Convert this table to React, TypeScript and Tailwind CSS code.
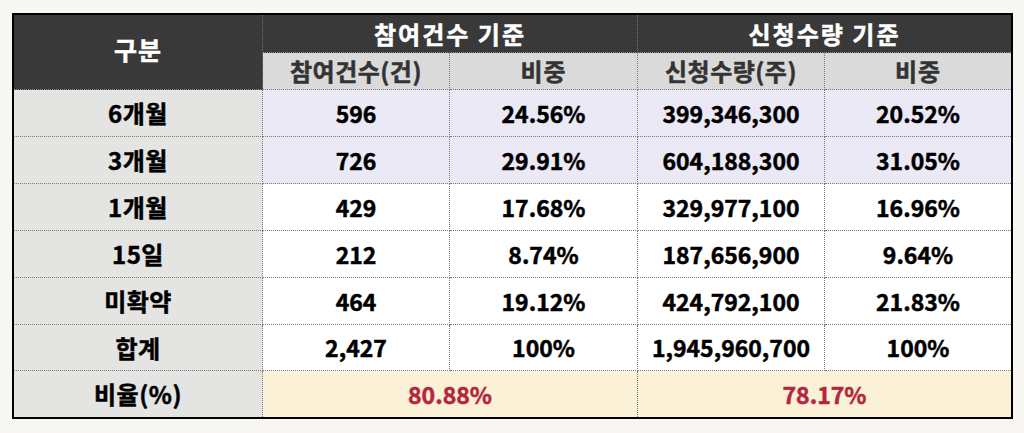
import React from "react";

const font = { fontFamily: '"Noto Sans CJK KR", "Noto Sans", sans-serif' };

type Row = { label: string; a: string; b: string; c: string; d: string; tint: boolean };

const rows: Row[] = [
  { label: "6개월", a: "596", b: "24.56%", c: "399,346,300", d: "20.52%", tint: true },
  { label: "3개월", a: "726", b: "29.91%", c: "604,188,300", d: "31.05%", tint: true },
  { label: "1개월", a: "429", b: "17.68%", c: "329,977,100", d: "16.96%", tint: false },
  { label: "15일", a: "212", b: "8.74%", c: "187,656,900", d: "9.64%", tint: false },
  { label: "미확약", a: "464", b: "19.12%", c: "424,792,100", d: "21.83%", tint: false },
  { label: "합계", a: "2,427", b: "100%", c: "1,945,960,700", d: "100%", tint: false },
];

export default function App() {
  return (
    <div className="w-[1024px] h-[433px] bg-[#f7f6f2] pt-[13px] pl-[12px]" style={font}>
      <div className="w-[1001px] border-2 border-black grid grid-cols-[249px_187px_188px_187px_186px] grid-rows-[38px_37px_47px_47px_47px_47px_47px_46px_46px] font-bold text-black [-webkit-text-stroke:0.5px_currentColor]">
        <div className="row-span-2 bg-[#393939] text-white text-[25px] tracking-[1px] flex items-center justify-center border-r border-[#6d6d6d] border-b border-dotted border-b-[#8a8a8a] pb-[4px]">
          구분
        </div>
        <div className="col-span-2 bg-[#393939] text-white text-[24px] tracking-[2px] flex items-center justify-center border-r border-r-[#777] border-b border-dotted border-b-[#8a8a8a]">
          참여건수 기준
        </div>
        <div className="col-span-2 bg-[#393939] text-white text-[24px] tracking-[2px] flex items-center justify-center border-b border-dotted border-b-[#8a8a8a]">
          신청수량 기준
        </div>
        <div className="bg-[#dadada] text-[#333] text-[24px] tracking-[0.5px] flex items-center justify-center border-r border-b border-dotted border-[#7a7a7a]">
          참여건수(건)
        </div>
        <div className="bg-[#dadada] text-[#333] text-[24px] tracking-[1px] flex items-center justify-center border-r border-b border-dotted border-[#7a7a7a]">
          비중
        </div>
        <div className="bg-[#dadada] text-[#333] text-[24px] tracking-[0.5px] flex items-center justify-center border-r border-b border-dotted border-[#7a7a7a]">
          신청수량(주)
        </div>
        <div className="bg-[#dadada] text-[#333] text-[24px] tracking-[1px] flex items-center justify-center border-b border-dotted border-[#7a7a7a]">
          비중
        </div>
        {rows.map((r) => (
          <React.Fragment key={r.label}>
            <div className="bg-[#e4e4e3] text-[24px] tracking-[0.5px] flex items-center justify-center border-r border-b border-dotted border-[#7a7a7a]">
              {r.label}
            </div>
            {[r.a, r.b, r.c].map((v, i) => (
              <div
                key={i}
                className={`${r.tint ? "bg-[#ebe9f5]" : "bg-white"} text-[23px] flex items-center justify-center border-r border-b border-dotted border-[#7a7a7a]`}
              >
                {v}
              </div>
            ))}
            <div
              className={`${r.tint ? "bg-[#ebe9f5]" : "bg-white"} text-[23px] flex items-center justify-center border-b border-dotted border-[#7a7a7a]`}
            >
              {r.d}
            </div>
          </React.Fragment>
        ))}
        <div className="bg-[#e4e4e3] text-[24px] tracking-[0.5px] flex items-center justify-center border-r border-dotted border-[#7a7a7a]">
          비율(%)
        </div>
        <div className="col-span-2 bg-[#fbf1d6] text-[#b3263f] text-[23px] flex items-center justify-center border-r border-dotted border-[#7a7a7a]">
          80.88%
        </div>
        <div className="col-span-2 bg-[#fbf1d6] text-[#b3263f] text-[23px] flex items-center justify-center">
          78.17%
        </div>
      </div>
    </div>
  );
}
